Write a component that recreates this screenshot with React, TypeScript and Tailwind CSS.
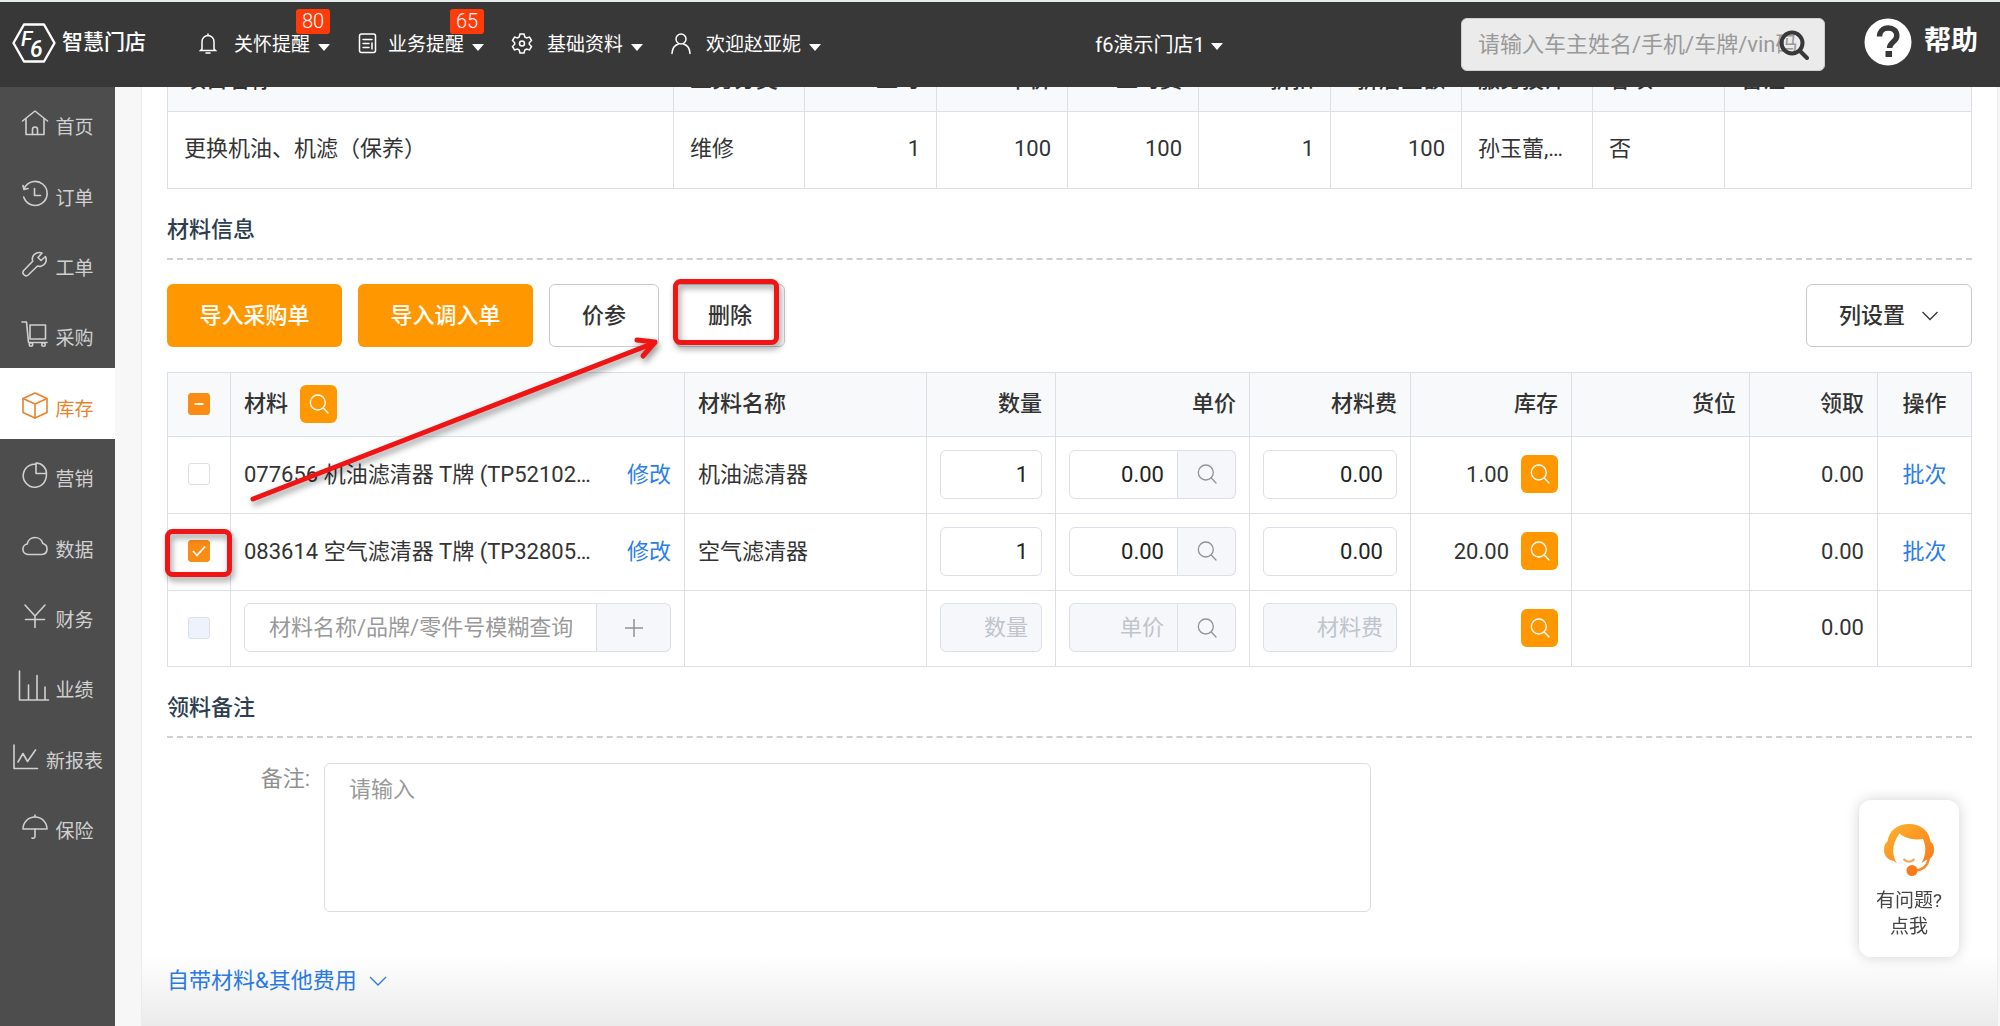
import type { ReactNode } from 'react';

const NAV_ITEMS = [
  { key: 'home', label: '首页' },
  { key: 'order', label: '订单' },
  { key: 'work', label: '工单' },
  { key: 'purchase', label: '采购' },
  { key: 'stock', label: '库存', active: true },
  { key: 'marketing', label: '营销' },
  { key: 'data', label: '数据' },
  { key: 'finance', label: '财务' },
  { key: 'performance', label: '业绩' },
  { key: 'report', label: '新报表' },
  { key: 'insurance', label: '保险' },
];

const NAV_ICONS: Record<string, ReactNode> = {
  home: (
    <>
      <path d="M1.500 12 14 2l12.500 10" />
      <path d="M5 10v15.500h18V10" />
      <path d="M11.500 25.500v-5a2.500 2.500 0 0 1 5 0v5" />
    </>
  ),
  order: (
    <>
      <path d="M3.200 8.500a12 12 0 1 1-.5 8.500" />
      <path d="M2 5.500 3 9.500l4-1" />
      <path d="M13.500 8.500v7h6" />
    </>
  ),
  work: (
    <path d="M24.500 6.500 20 10.500l-3-3 4-4.500c-4-1.500-8.500.5-9.500 4.500-.3 1.500-.2 2.500.2 3.700L2.700 20.500a3.200 3.200 0 0 0 4.500 4.500l9.300-9c1.200.4 2.200.5 3.700.2 4.500-1.200 6-5.700 4.300-9.700Z" />
  ),
  purchase: (
    <>
      <path d="M1 2h4.500l2 20.500H26" />
      <rect x="9" y="5" width="15.500" height="14" />
      <circle cx="10" cy="24.500" r="1.700" />
      <circle cx="22.500" cy="24.500" r="1.700" />
    </>
  ),
  stock: (
    <>
      <path d="M14 2 26 7.500v14L14 27 2 21.500v-14Z" />
      <path d="M2 7.500 14 13l12-5.500M14 13v14" />
    </>
  ),
  marketing: (
    <>
      <path d="M11 3.500a11.500 11.500 0 1 0 13.500 15.200c.8-1.800 1-3.400.9-5.200" />
      <path d="M15 2v10.500h10.500A10.500 10.500 0 0 0 15 2Z" />
      <path d="M11 3.500 15 3" />
    </>
  ),
  data: (
    <path d="M7 22.500a5.300 5.300 0 0 1-.8-10.500A8 8 0 0 1 21.800 11.500 5.600 5.600 0 0 1 21 22.500Z" />
  ),
  finance: <path d="m4 3 10 11L24 3M4.500 17.500h19M14 14v11.500" />,
  performance: <path d="M-1.500-1v29h29M7.500 27V13M16 27V3.500M24 27V15" />,
  report: <path d="M2 2v23.500h23.500M6 19l5-8.500 4.500 8 8-11.500" />,
  insurance: (
    <>
      <path d="M2 16a12 12 0 0 1 24 0Z" />
      <path d="M14 4V2M14 16v7a2 2 0 0 1-3 2" />
    </>
  ),
};

const TOP_MENUS = [
  {
    label: '关怀提醒',
    badge: 80,
    gap: 'gap-[15px]',
    icon: (
      <>
        <path d="M5 17V9.500a6 6 0 0 1 12 0V17l1.500 1.500h-15Z" />
        <path d="M11 3.500V2M9 21h4" />
      </>
    ),
  },
  {
    label: '业务提醒',
    badge: 65,
    gap: 'gap-[9px]',
    icon: (
      <>
        <rect x="2.500" y="2" width="16" height="18.500" rx="2" />
        <path d="M6 7.500h9M6 11.500h6M6 15.500h6M15 11v6" />
      </>
    ),
  },
  {
    label: '基础资料',
    gap: 'gap-[14px]',
    icon: (
      <>
        <path d="M9 2h4l.8 3 1.700 1 3-.9 2 3.400-2.200 2.200v1.600l2.200 2.200-2 3.400-3-.9-1.700 1-.8 3H9l-.8-3-1.700-1-3 .9-2-3.400 2.200-2.200v-1.600L1.500 8.500l2-3.400 3 .9 1.700-1Z" />
        <circle cx="11" cy="11.500" r="2.500" />
      </>
    ),
  },
  {
    label: '欢迎赵亚妮',
    gap: 'gap-[14px]',
    icon: (
      <>
        <circle cx="11" cy="7" r="5" />
        <path d="M2 21.500c.3-5.500 3-8.500 6.500-9.500M20 21.500c-.3-5.500-3-8.500-6.500-9.500" />
      </>
    ),
  },
];

const PROJECT_COLUMNS = [
  { label: '项目名称', value: '更换机油、机滤（保养）', width: 'w-[506px]' },
  { label: '业务分类', value: '维修', width: 'w-[131px]' },
  { label: '工时', value: '1', width: 'w-[132px]', right: true },
  { label: '单价', value: '100', width: 'w-[131px]', right: true },
  { label: '工时费', value: '100', width: 'w-[131px]', right: true },
  { label: '折扣', value: '1', width: 'w-[132px]', right: true },
  { label: '折后金额', value: '100', width: 'w-[131px]', right: true },
  { label: '服务技师', value: '孙玉蕾,李明', width: 'w-[131px]' },
  { label: '客项', value: '否', width: 'w-[132px]' },
  { label: '备注', value: '', width: '' },
];

const MATERIALS = [
  { code: '077656 机油滤清器 T牌 (TP52102B) 1.0L', name: '机油滤清器', stock: '1.00', checked: false },
  { code: '083614 空气滤清器 T牌 (TP32805A) 1.0L', name: '空气滤清器', stock: '20.00', checked: true },
];

const CELL = 'border border-[#dcdfe6] px-[13px] pt-0 pb-0.5';
const INPUT =
  'block h-[49px] w-full min-w-0 rounded-md border border-[#dcdfe6] bg-white px-[13px] text-right text-[22px] text-[#222] outline-none placeholder:text-[#c0c4cc] disabled:bg-[#f5f7fa]';
const ADDON = 'flex h-[49px] shrink-0 items-center justify-center rounded-r-md border border-l-0 border-[#dcdfe6] bg-[#f5f7fa] text-[#8f9298]';

function SearchIcon({ className }: { className: string }) {
  return (
    <svg viewBox="0 0 20 20" className={className} fill="none" stroke="currentColor" strokeWidth="1.300" strokeLinecap="round">
      <circle cx="8.800" cy="8.500" r="7.500" />
      <path d="m14.300 14 4.700 5" />
    </svg>
  );
}

function StockButton({ label }: { label: string }) {
  return (
    <button type="button" aria-label={label} className="flex h-[38px] w-[37px] shrink-0 items-center justify-center rounded-md bg-[#ff9800] text-white">
      <SearchIcon className="size-5" />
    </button>
  );
}

function Caret() {
  return <span className="mt-1 border-x-[6px] border-t-[7px] border-x-transparent border-t-current" />;
}

function Checkbox({ label, state }: { label: string; state?: 'on' | 'mixed' | 'disabled' }) {
  return (
    <span className="relative mx-auto block size-[22px]">
      <input
        type="checkbox"
        aria-label={label}
        defaultChecked={state === 'on' || state === 'mixed'}
        disabled={state === 'disabled'}
        className="block size-[22px] appearance-none rounded-[3px] border border-[#dcdfe6] bg-white checked:border-[#fa8c16] checked:bg-[#fa8c16] disabled:bg-[#edf2fc]"
      />
      <svg viewBox="0 0 22 22" className="pointer-events-none absolute inset-0" fill="none" stroke="#fff" strokeWidth="1.800">
        {state === 'on' && <path d="m5 11 4 4.500 8-9" />}
        {state === 'mixed' && <path d="M6.500 11h9" />}
      </svg>
    </span>
  );
}

function TopBar() {
  return (
    <header className="relative z-10 flex h-[87px] shrink-0 items-center border-t-2 border-[#e6ecec] bg-[#383838] pr-[22px] pl-3 text-[19px] text-white">
      <a href="#home" className="flex items-center gap-1.5 pb-1">
        <svg viewBox="0 0 44 40" className="h-10 w-11" fill="none" stroke="#fff" strokeWidth="2.400" strokeLinejoin="round">
          <path d="M12 1.500h20L42.500 20 32 38.500H12L1.500 20Z" />
          <text x="9" y="23" fontSize="21" fontStyle="italic" fontWeight="500" fill="#fff" stroke="none">F</text>
          <text x="18" y="34" fontSize="23" fontStyle="italic" fontWeight="500" fill="#fff" stroke="none">6</text>
        </svg>
        <span className="text-[21px] font-medium">智慧门店</span>
      </a>

      <nav className="ml-[51px] flex gap-[27px]">
        {TOP_MENUS.map((menu) => (
          <button key={menu.label} type="button" className="relative flex h-[85px] items-center gap-2 pt-0.5">
            <span className={`flex items-center ${menu.gap}`}>
              <svg viewBox="0 0 22 23" className="mb-1 h-[23px] w-[22px]" fill="none" stroke="currentColor" strokeWidth="1.500" strokeLinecap="round">
                {menu.icon}
              </svg>
              {menu.label}
            </span>
            <Caret />
            {menu.badge && (
              <span className="absolute top-[7px] right-0 h-[25px] w-[34px] rounded-[3px] bg-[#ff3b0a] text-center text-[20px] leading-[25px] font-light">
                {menu.badge}
              </span>
            )}
          </button>
        ))}
      </nav>

      <div className="flex flex-1 justify-center pl-9">
        <button type="button" className="flex items-center gap-1.5 text-[20px]">
          f6演示门店1
          <Caret />
        </button>
      </div>

      <div className="relative w-[364px]">
        <input
          type="text"
          aria-label="搜索"
          placeholder="请输入车主姓名/手机/车牌/vin码"
          className="h-[53px] w-full rounded-md border border-[#cfcfcf] bg-[#ebebeb] pr-6 pl-4 text-[22px] text-[#333] outline-none placeholder:text-[#999]"
        />
        <button type="button" aria-label="查询" className="absolute top-3 right-4 text-[#383838]">
          <svg viewBox="0 0 30 30" className="size-[30px]" fill="none" stroke="currentColor" strokeWidth="4" strokeLinecap="round">
            <circle cx="13" cy="13" r="10.500" />
            <path d="m21 21 7 7" />
          </svg>
        </button>
      </div>
      <a href="#help" className="ml-[39px] flex items-center gap-3 pb-1.5 text-[27px] font-bold">
        <svg viewBox="0 0 48 48" className="size-12">
          <circle cx="24" cy="24" r="23.500" fill="#fff" />
          <path d="M15.500 18.500c0-5 3.700-8.500 8.700-8.500s8.600 3.200 8.600 7.700c0 6-7.300 6.500-7.300 12.300" fill="none" stroke="#383838" strokeWidth="5.500" />
          <rect x="21.500" y="33" width="6.500" height="6" fill="#383838" />
        </svg>
        帮助
      </a>
    </header>
  );
}

function Sidebar() {
  return (
    <aside className="w-[115px] shrink-0 bg-[#4d4d4d]">
      <nav className="grid h-[774px] auto-rows-fr text-[19px] leading-5 text-[#d0d0d0]">
        {NAV_ITEMS.map((item) => (
          <a
            key={item.key}
            href={`#${item.key}`}
            className={`flex items-end justify-center gap-1.5 pb-[19px] ${item.active ? 'bg-white text-[#e9832a]' : ''}`}
          >
            <svg viewBox="0 0 28 28" className="mb-px size-7 overflow-visible" fill="none" stroke="currentColor" strokeWidth="1.600" strokeLinecap="round" strokeLinejoin="round">
              {NAV_ICONS[item.key]}
            </svg>
            {item.label}
          </a>
        ))}
      </nav>
    </aside>
  );
}

function ProjectTable() {
  return (
    <table className="w-full table-fixed border-collapse">
      <thead className="bg-[#f8f9fa]">
        <tr className="h-[65px]">
          {PROJECT_COLUMNS.map((col) => (
            <th
              key={col.label}
              className={`border border-[#dcdfe6] px-4 font-medium ${col.width} ${col.right ? 'text-right' : 'text-left'}`}
            >
              {col.label}
            </th>
          ))}
        </tr>
      </thead>
      <tbody>
        <tr className="h-[77px]">
          {PROJECT_COLUMNS.map((col) => (
            <td
              key={col.label}
              className={`truncate border border-[#dcdfe6] px-4 pb-1 ${col.right ? 'text-right' : 'text-left'}`}
            >
              {col.value}
            </td>
          ))}
        </tr>
      </tbody>
    </table>
  );
}

function SectionTitle({ children }: { children: ReactNode }) {
  return (
    <h2 className="border-b-2 border-dashed border-[#cfcfcf] pb-3 text-[22px] leading-8 font-medium text-[#2c3e50]">
      {children}
    </h2>
  );
}

function Toolbar() {
  const primary = 'h-[63px] w-[175px] rounded-md bg-[#ff9800] font-medium text-white';
  const plain = 'h-[63px] rounded-md border border-[#c8c9cc] bg-white px-8 font-medium';
  return (
    <div className="mt-6 flex gap-4">
      <button type="button" className={primary}>导入采购单</button>
      <button type="button" className={primary}>导入调入单</button>
      <button type="button" className={plain}>价参</button>
      <button type="button" className={plain}>删除</button>
      <button type="button" className={`${plain} ml-auto flex items-center gap-4`}>
        列设置
        <svg viewBox="0 0 18 18" className="size-[18px]" fill="none" stroke="currentColor" strokeWidth="1.300">
          <path d="m1.500 5 7.500 7.500L16.500 5" />
        </svg>
      </button>
    </div>
  );
}

function MaterialTable() {
  return (
    <table className="mt-[25px] w-full table-fixed border-collapse">
      <thead className="bg-[#f8f9fa] text-right">
        <tr className="h-16 *:font-medium">
          <th className="w-[63px] border border-[#dcdfe6] pb-0.5">
            <Checkbox label="全选" state="mixed" />
          </th>
          <th className={`${CELL} w-[454px]`}>
            <div className="flex items-center gap-3">
              材料
              <StockButton label="搜索材料" />
            </div>
          </th>
          <th className={`${CELL} w-[242px] text-left`}>材料名称</th>
          <th className={`${CELL} w-[129px]`}>数量</th>
          <th className={`${CELL} w-[194px]`}>单价</th>
          <th className={`${CELL} w-[161px]`}>材料费</th>
          <th className={`${CELL} w-[161px]`}>库存</th>
          <th className={CELL}>货位</th>
          <th className={`${CELL} w-[128px]`}>领取</th>
          <th className={`${CELL} w-[94px] text-center`}>操作</th>
        </tr>
      </thead>
      <tbody className="text-right">
        {MATERIALS.map((row) => (
          <tr key={row.name} className="h-[77px]">
            <td className="border border-[#dcdfe6] pb-0.5">
              <Checkbox label={row.name} state={row.checked ? 'on' : undefined} />
            </td>
            <td className={CELL}>
              <div className="flex">
                <span className="w-[354px] truncate text-left">{row.code}</span>
                <a href="#edit" className="ml-auto text-[#2b7de9]">修改</a>
              </div>
            </td>
            <td className={`${CELL} text-left`}>{row.name}</td>
            <td className={CELL}>
              <input type="text" aria-label="数量" defaultValue="1" className={INPUT} />
            </td>
            <td className={CELL}>
              <div className="flex">
                <input type="text" aria-label="单价" defaultValue="0.00" className={`${INPUT} rounded-r-none`} />
                <button type="button" aria-label="查询单价" className={`${ADDON} w-[58px]`}>
                  <SearchIcon className="size-5" />
                </button>
              </div>
            </td>
            <td className={CELL}>
              <input type="text" aria-label="材料费" defaultValue="0.00" className={INPUT} />
            </td>
            <td className={CELL}>
              <div className="flex items-center justify-end gap-3">
                {row.stock}
                <StockButton label="查看库存" />
              </div>
            </td>
            <td className={CELL} />
            <td className={CELL}>0.00</td>
            <td className={`${CELL} text-center`}>
              <a href="#batch" className="text-[#2b7de9]">批次</a>
            </td>
          </tr>
        ))}
        <tr className="h-[76px]">
          <td className="border border-[#dcdfe6] pb-0.5">
            <Checkbox label="新增材料" state="disabled" />
          </td>
          <td className={CELL}>
            <div className="flex">
              <input
                type="text"
                aria-label="材料"
                placeholder="材料名称/品牌/零件号模糊查询"
                className="h-[49px] min-w-0 flex-1 rounded-l-md border border-[#dcdfe6] px-6 text-[22px] outline-none placeholder:text-[#999]"
              />
              <button type="button" aria-label="添加" className={`${ADDON} w-[74px]`}>
                <svg viewBox="0 0 20 20" className="size-5" stroke="currentColor" strokeWidth="1.500">
                  <path d="M10 1v18M1 10h18" />
                </svg>
              </button>
            </div>
          </td>
          <td className={CELL} />
          <td className={CELL}>
            <input type="text" aria-label="数量" placeholder="数量" disabled className={INPUT} />
          </td>
          <td className={CELL}>
            <div className="flex">
              <input type="text" aria-label="单价" placeholder="单价" disabled className={`${INPUT} rounded-r-none`} />
              <button type="button" aria-label="查询单价" className={`${ADDON} w-[58px]`}>
                <SearchIcon className="size-5" />
              </button>
            </div>
          </td>
          <td className={CELL}>
            <input type="text" aria-label="材料费" placeholder="材料费" disabled className={INPUT} />
          </td>
          <td className={CELL}>
            <div className="flex justify-end">
              <StockButton label="查看库存" />
            </div>
          </td>
          <td className={CELL} />
          <td className={CELL}>0.00</td>
          <td className={CELL} />
        </tr>
      </tbody>
    </table>
  );
}

// Red step marks drawn over the page: tick the row, then press delete
function GuideMarks() {
  return (
    <svg
      viewBox="165 270 620 315"
      className="pointer-events-none absolute top-[183px] left-[23px] h-[315px] w-[620px] overflow-visible drop-shadow-[2px_4px_3px_rgba(0,0,0,0.4)]"
      fill="none"
      stroke="#f01414"
      strokeWidth="5"
      strokeLinecap="round"
      strokeLinejoin="round"
    >
      <rect x="675.500" y="281.500" width="101" height="61" rx="5" />
      <rect x="167.500" y="531.500" width="62" height="43" rx="5" />
      <path d="M253 499 654 343" />
      <path d="m637 340 18 2-12 14" />
    </svg>
  );
}

function HelpCard() {
  return (
    <button
      type="button"
      className="fixed right-[41px] bottom-[69px] flex h-[157px] w-[100px] flex-col items-center rounded-xl bg-white pt-6 text-[19px] leading-[26px] text-[#444] shadow-[0_0_14px_rgba(0,0,0,0.18)]"
    >
      <svg viewBox="0 0 50 52" className="mb-3 h-[52px] w-[50px]">
        <defs>
          <linearGradient id="hair" x1="0" y1="0" x2="1" y2="1">
            <stop offset="0" stopColor="#ffb52e" />
            <stop offset="1" stopColor="#f97a1a" />
          </linearGradient>
        </defs>
        <path
          fill="url(#hair)"
          d="M25 0C13 0 5 7 3.500 17.500 1 19 0 22 0 26c0 6 4 10 9 10.500l4 2.500C8 32 7 21 15.500 9.500 21 14 29 16.500 39 15c3.500 8 3 16-1.500 24l4.500-3c5-.5 8-5 8-10 0-4-1-7-3.500-8.500C45 7 37 0 25 0Z"
        />
        <path d="M45 34c-1.500 8-6 12.500-15 12.500" fill="none" stroke="#f98a2b" strokeWidth="2.500" />
        <path d="M19.500 35c3 3.500 8 3.500 11 0" fill="none" stroke="#f9a35a" strokeWidth="2" />
        <circle cx="28" cy="46.500" r="5.500" fill="#f97a1a" />
      </svg>
      <span>有问题?</span>
      <span>点我</span>
    </button>
  );
}

export default function App() {
  return (
    <div className="flex h-screen flex-col overflow-hidden bg-[#f7f7f7] font-[Roboto,'Noto_Sans_CJK_SC',sans-serif] text-[22px] text-[#333]">
      <TopBar />
      <div className="flex min-h-0 flex-1">
        <Sidebar />
        <main className="relative mr-[2px] ml-[26px] min-w-0 flex-1 overflow-hidden border-x border-[#ebebeb] bg-white px-[25px]">
          <div className="-mt-[41px]">
            <ProjectTable />
          </div>

          <section className="mt-[25px]">
            <SectionTitle>材料信息</SectionTitle>
            <Toolbar />
            <MaterialTable />
          </section>

          <section className="mt-[25px]">
            <SectionTitle>领料备注</SectionTitle>
            <div className="mt-[25px] flex gap-3.5">
              <label htmlFor="remark" className="w-[143px] text-right leading-8 text-[#909090]">
                备注:
              </label>
              <textarea
                id="remark"
                placeholder="请输入"
                className="block h-[149px] w-[58%] resize-none rounded-md border border-[#dcdcdc] bg-white px-6 py-2.5 leading-8 outline-none placeholder:text-[#999]"
              />
            </div>
          </section>

          <button type="button" className="mt-[53px] flex items-center gap-3 leading-8 text-[#2b7de9]">
            自带材料&amp;其他费用
            <svg viewBox="0 0 18 18" className="size-[18px]" fill="none" stroke="currentColor" strokeWidth="1.300">
              <path d="m1 5 8 8 8-8" />
            </svg>
          </button>

          <div className="pointer-events-none absolute inset-x-0 bottom-0 h-[72px] bg-gradient-to-b from-transparent to-black/8" />
          <GuideMarks />
        </main>
      </div>
      <HelpCard />
    </div>
  );
}
